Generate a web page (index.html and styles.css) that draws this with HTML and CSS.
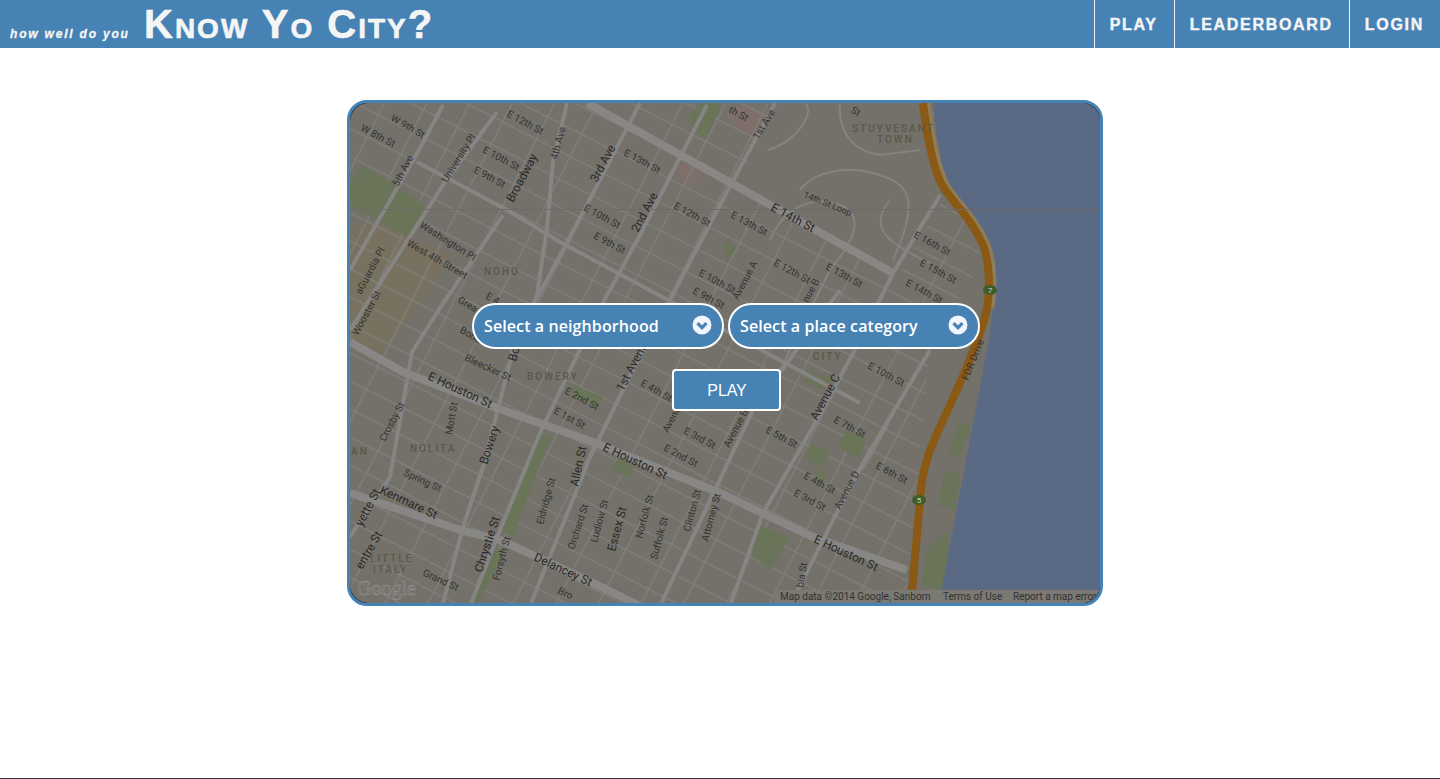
FILE: index.html
```html
<!DOCTYPE html>
<html lang="en">
<head>
    <meta charset="UTF-8">
    <meta name="viewport" content="width=device-width, initial-scale=1.0">
    <title>Know Yo City?</title>
    <link rel="stylesheet" href="styles.css">
</head>
<body>
    <header class="topbar">
        <div class="brand">
            <span class="tagline">how well do you</span>
            <span class="title">Know Yo City?</span>
        </div>
        <nav class="nav">
            <a href="#">PLAY</a>
            <a href="#">LEADERBOARD</a>
            <a href="#">LOGIN</a>
        </nav>
    </header>

    <main class="stage">
        <div class="map-frame">
            <svg class="map" viewBox="350 103 750 500" width="750" height="500">
                <defs>
                    <!-- the street grid, turned to the angle of Manhattan -->
                    <pattern id="grid" width="38" height="25" patternUnits="userSpaceOnUse" patternTransform="rotate(27 350 103)">
                        <path class="grid-line" d="M0 0H38M0 0V25"/>
                    </pattern>
                </defs>
                <rect class="land" x="350" y="103" width="750" height="500"/>

                <!-- blocks under the grid -->
                <path class="sand" d="M350 225L375 222 450 255 430 290 400 330 380 355 350 345Z"/>
                <path class="pink" d="M725 115L745 103 768 118 752 137ZM673 165L695 162 705 180 686 188Z"/>
                <rect class="grid-fill" x="350" y="103" width="750" height="500"/>

                <!-- Stuyvesant Town and the strip along the river have no grid -->
                <path class="land" d="M772 103H930L945 195 898 276 738 184Z"/>
                <path class="land" d="M930 340L1000 240V606H905Z"/>

                <path class="park" d="M363 165L428 207 410 238 350 205V182Z"/>
                <path class="park" d="M687 120L700 103H722L705 140ZM540 433L551 437 513 537 500 530ZM497 548L504 553 478 603H470Z"/>
                <path class="park" d="M757 524L790 537 770 570 752 555ZM846 430L866 437 860 458 838 448ZM958 423L970 426 960 458 948 453ZM945 470L960 474 955 510 938 505Z"/>
                <path class="park" d="M926 551L948 530 950 570 942 590 922 585ZM574 385L603 397 598 407 570 396ZM812 443L830 452 822 468 805 458ZM723 242L736 247 728 262ZM700 105L712 112 704 125ZM810 372L832 378 825 390 803 382ZM618 458L634 466 628 478 612 470ZM815 470L826 474 820 488Z"/>

                <!-- lanes -->
                <path class="lane" d="M840 103C838 130 850 150 880 155L920 150M768 150C800 140 815 110 805 103M800 190C815 170 850 165 880 175S920 200 893 260M890 200C870 225 880 240 930 263M770 240C785 205 815 195 840 205S855 240 830 270L780 370M930 350C905 385 880 445 862 470"/>

                <!-- wider streets -->
                <path class="road" d="M417 162L507 210 560 242 720 328 860 403M443 105L420 148 350 270M497 112L443 185 350 330M503 215L440 308 412 352 390 477 350 537M775 103L720 205 633 370 590 457 530 606M707 105L640 235 600 308 540 433 500 530 470 606M640 103L580 218 520 330M567 103L553 162 547 228 537 295 513 350 483 467 463 527 443 603M940 195L893 273 853 353 817 420 763 513 730 606M840 290L753 410 660 606M930 350L863 463 833 520 793 600"/>
                <path class="road-wide" d="M350 342L403 372 497 408 593 442 720 493 813 537 907 570M350 493L460 530 500 540 593 583 640 606M587 103L893 273"/>

                <path class="water" d="M933 103C937 140 940 165 950 185S985 235 993 262C997 285 990 340 985 360L953 530 942 587 940 603H1100V103Z"/>
                <path class="highway-edge" d="M926 103C930 135 935 165 944 183S973 215 986 245C993 262 993 290 990 308"/>
                <path class="highway" d="M923 103C927 135 932 165 941 183S970 215 983 245C990 262 990 290 987 308S975 345 965 372L935 438C925 460 921 480 920 500L911 603"/>
                <path class="seam" d="M350 209.500H1100"/>

                <ellipse class="shield" cx="990" cy="290" rx="7" ry="5"/>
                <ellipse class="shield" cx="919" cy="500" rx="7" ry="5"/>
                <text class="shield-num" x="990" y="293">7</text>
                <text class="shield-num" x="919" y="503">5</text>

                <!-- street names -->
                <text class="st" transform="translate(390 120) rotate(30)">W 9th St</text>
                <text class="st" transform="translate(360 130) rotate(28)">W 8th St</text>
                <text class="st" transform="translate(506 116) rotate(28)">E 12th St</text>
                <text class="st" transform="translate(557 160) rotate(-75)">4th Ave</text>
                <text class="st big" transform="translate(513 203) rotate(-62)">Broadway</text>
                <text class="st" transform="translate(482 152) rotate(28)">E 10th St</text>
                <text class="st" transform="translate(473 172) rotate(28)">E 9th St</text>
                <text class="st" transform="translate(447 183) rotate(-58)">University Pl</text>
                <text class="st" transform="translate(398 187) rotate(-62)">5th Ave</text>
                <text class="st big" transform="translate(597 183) rotate(-62)">3rd Ave</text>
                <text class="st" transform="translate(623 155) rotate(28)">E 13th St</text>
                <text class="st" transform="translate(673 208) rotate(28)">E 12th St</text>
                <text class="st big" transform="translate(638 233) rotate(-62)">2nd Ave</text>
                <text class="st" transform="translate(583 210) rotate(28)">E 10th St</text>
                <text class="st" transform="translate(593 238) rotate(28)">E 9th St</text>
                <text class="st" transform="translate(419 227) rotate(32)">Washington Pl</text>
                <text class="st" transform="translate(406 245) rotate(30)">West 4th Street</text>
                <text class="st" transform="translate(698 275) rotate(28)">E 10th St</text>
                <text class="st" transform="translate(692 293) rotate(28)">E 9th St</text>
                <text class="st" transform="translate(361 295) rotate(-62)">aGuardia Pl</text>
                <text class="st" transform="translate(358 336) rotate(-62)">Wooster St</text>
                <text class="st" transform="translate(457 302) rotate(30)">Grea</text>
                <text class="st" transform="translate(459 332) rotate(30)">Bond</text>
                <text class="st" transform="translate(485 298) rotate(30)">E 4</text>
                <text class="st" transform="translate(758 140) rotate(-58)">1st Ave</text>
                <text class="st" transform="translate(728 112) rotate(28)">th St</text>
                <text class="st" transform="translate(850 112) rotate(30)">St</text>
                <text class="st tiny" transform="translate(803 197) rotate(22)">14th St Loop</text>
                <text class="st big" transform="translate(770 210) rotate(28)">E 14th St</text>
                <text class="st" transform="translate(730 217) rotate(28)">E 13th St</text>
                <text class="st" transform="translate(773 265) rotate(28)">E 12th St</text>
                <text class="st" transform="translate(825 269) rotate(28)">E 13th St</text>
                <text class="st" transform="translate(913 237) rotate(28)">E 16th St</text>
                <text class="st" transform="translate(919 265) rotate(28)">E 15th St</text>
                <text class="st" transform="translate(905 285) rotate(28)">E 14th St</text>
                <text class="st" transform="translate(738 300) rotate(-62)">Avenue A</text>
                <text class="st" transform="translate(808 303) rotate(-62)">nue B</text>
                <text class="st" transform="translate(968 381) rotate(-68)">FDR Drive</text>
                <text class="st" transform="translate(464 360) rotate(25)">Bleecker St</text>
                <text class="st big" transform="translate(516 362) rotate(-75)">Bo</text>
                <text class="st big" transform="translate(623 392) rotate(-62)">1st Avenue</text>
                <text class="st" transform="translate(640 385) rotate(30)">E 4th St</text>
                <text class="st" transform="translate(564 393) rotate(28)">E 2nd St</text>
                <text class="st" transform="translate(553 413) rotate(28)">E 1st St</text>
                <text class="st big" transform="translate(427 379) rotate(25)">E Houston St</text>
                <text class="st big" transform="translate(602 450) rotate(25)">E Houston St</text>
                <text class="st big" transform="translate(813 542) rotate(25)">E Houston St</text>
                <text class="st" transform="translate(385 442) rotate(-62)">Crosby St</text>
                <text class="st" transform="translate(452 435) rotate(-80)">Mott St</text>
                <text class="st big" transform="translate(487 465) rotate(-72)">Bowery</text>
                <text class="st big" transform="translate(578 487) rotate(-78)">Allen St</text>
                <text class="st" transform="translate(543 525) rotate(-75)">Eldridge St</text>
                <text class="st" transform="translate(574 550) rotate(-72)">Orchard St</text>
                <text class="st" transform="translate(597 543) rotate(-75)">Ludlow St</text>
                <text class="st big" transform="translate(615 552) rotate(-75)">Essex St</text>
                <text class="st" transform="translate(642 539) rotate(-75)">Norfolk St</text>
                <text class="st" transform="translate(657 560) rotate(-75)">Suffolk St</text>
                <text class="st" transform="translate(690 532) rotate(-75)">Clinton St</text>
                <text class="st" transform="translate(708 542) rotate(-75)">Attorney St</text>
                <text class="st" transform="translate(403 475) rotate(25)">Spring St</text>
                <text class="st big" transform="translate(379 493) rotate(25)">Kenmare St</text>
                <text class="st big" transform="translate(482 573) rotate(-72)">Chrystie St</text>
                <text class="st" transform="translate(499 581) rotate(-75)">Forsyth St</text>
                <text class="st big" transform="translate(533 560) rotate(25)">Delancey St</text>
                <text class="st" transform="translate(422 575) rotate(25)">Grand St</text>
                <text class="st" transform="translate(557 593) rotate(25)">Bro</text>
                <text class="st big" transform="translate(362 527) rotate(-62)">yette St</text>
                <text class="st big" transform="translate(362 570) rotate(-60)">entre St</text>
                <text class="st" transform="translate(765 432) rotate(28)">E 5th St</text>
                <text class="st" transform="translate(803 478) rotate(28)">E 4th St</text>
                <text class="st" transform="translate(793 495) rotate(28)">E 3rd St</text>
                <text class="st" transform="translate(840 510) rotate(-62)">Avenue D</text>
                <text class="st" transform="translate(729 448) rotate(-62)">Avenue B</text>
                <text class="st" transform="translate(668 433) rotate(-62)">Avenue</text>
                <text class="st big" transform="translate(817 421) rotate(-62)">Avenue C</text>
                <text class="st" transform="translate(833 422) rotate(28)">E 7th St</text>
                <text class="st" transform="translate(875 468) rotate(28)">E 6th St</text>
                <text class="st" transform="translate(867 368) rotate(28)">E 10th St</text>
                <text class="st" transform="translate(683 433) rotate(28)">E 3rd St</text>
                <text class="st" transform="translate(663 450) rotate(28)">E 2nd St</text>
                <text class="st" transform="translate(803 588) rotate(-80)">bia St</text>

                <!-- neighborhoods -->
                <text class="area" x="484" y="275">NOHO</text>
                <text class="area" x="852" y="132">STUYVESANT</text>
                <text class="area" x="877" y="143">TOWN</text>
                <text class="area" x="813" y="360">CITY</text>
                <text class="area" x="527" y="380">BOWERY</text>
                <text class="area" x="410" y="452">NOLITA</text>
                <text class="area" x="351" y="455">AN</text>
                <text class="area" x="370" y="562">LITTLE</text>
                <text class="area" x="373" y="573">ITALY</text>

                <text class="logo" x="357" y="595">Google</text>

                <rect class="credit-bg" x="774" y="590" width="326" height="13"/>
                <text class="credit" x="780" y="600">Map data ©2014 Google, Sanborn</text>
                <text class="credit" x="943" y="600">Terms of Use</text>
                <text class="credit" x="1013" y="600">Report a map error</text>
            </svg>

            <form class="controls">
                <div class="pickers">
                    <div class="picker">
                        <select>
                            <option>Select a neighborhood</option>
                        </select>
                        <svg class="chevron" viewBox="0 0 20 20" width="20" height="20">
                            <circle class="chevron-disc" cx="10" cy="10" r="9.500"/>
                            <path class="chevron-mark" d="M5.500 8.200L10 12.700 14.500 8.200"/>
                        </svg>
                    </div>
                    <div class="picker">
                        <select>
                            <option>Select a place category</option>
                        </select>
                        <svg class="chevron" viewBox="0 0 20 20" width="20" height="20">
                            <circle class="chevron-disc" cx="10" cy="10" r="9.500"/>
                            <path class="chevron-mark" d="M5.500 8.200L10 12.700 14.500 8.200"/>
                        </svg>
                    </div>
                </div>
                <button class="play-btn" type="button">PLAY</button>
            </form>
        </div>
    </main>
</body>
</html>
```

FILE: styles.css
```css
html, body {
    height: 100%;
}

body {
    margin: 0;
    box-sizing: border-box;
    border-bottom: 1px solid #333;
    background-color: #fff;
    font-family: "Liberation Sans", Arial, sans-serif;
}

.topbar {
    display: flex;
    justify-content: space-between;
    height: 48px;
    background-color: #4682b4;
}

.brand {
    display: flex;
    align-items: baseline;
    padding-left: 10px;
    color: #f5f5f5;
    font-weight: bold;
    line-height: 48px;
}

.tagline {
    width: 134px;
    font-size: 12px;
    font-style: italic;
    letter-spacing: 1.8px;
    -webkit-text-stroke: 0.3px #f5f5f5;
}

.title {
    font-size: 40px;
    font-variant: small-caps;
    letter-spacing: 2px;
    -webkit-text-stroke: 0.6px #f5f5f5;
}

.nav {
    display: flex;
}

.nav a {
    padding: 1px 16px 0 15px;
    border-left: 1px solid #f0f4f8;
    color: #f5f5f5;
    font-size: 16px;
    font-weight: bold;
    letter-spacing: 1.7px;
    line-height: 47px;
    text-decoration: none;
    -webkit-text-stroke: 0.4px #f5f5f5;
}

.stage {
    display: flex;
    justify-content: center;
    padding: 52px 0 0 10px;
}

.map-frame {
    position: relative;
    width: 750px;
    height: 500px;
    border: 3px solid #4682b4;
    border-radius: 20px;
    background-color: #22384e;
    overflow: hidden;
}

.map {
    display: block;
    border-radius: 19px;
}

.land { fill: #73716a; }
.sand { fill: #78715f; }
.pink { fill: #7f6f6b; }
.park { fill: #6a7458; }
.water { fill: #5a6a85; }
.grid-fill { fill: url(#grid); }

.grid-line {
    fill: none;
    stroke: #81807b;
    stroke-width: 2.5;
}

.lane, .road, .road-wide, .highway, .highway-edge, .seam {
    fill: none;
}

.lane {
    stroke: #85837e;
    stroke-width: 2;
}

.road {
    stroke: #868583;
    stroke-width: 4;
}

.road-wide {
    stroke: #888785;
    stroke-width: 8;
}

.highway {
    stroke: #8a5a14;
    stroke-width: 8;
}

.highway-edge {
    stroke: #8f7d5a;
    stroke-width: 9;
}

.seam {
    stroke: #6c6b68;
    stroke-width: 1;
}

.shield { fill: #3f5c2c; }

.shield-num {
    fill: #c8d0c0;
    font-family: Roboto, sans-serif;
    font-size: 8px;
    text-anchor: middle;
}

.st {
    fill: #353431;
    font-family: Roboto, sans-serif;
    font-size: 10px;
}

.st.big {
    fill: #2a2927;
    font-size: 12px;
}

.st.tiny {
    font-size: 9px;
}

.area {
    fill: #5c5748;
    font-family: Roboto, sans-serif;
    font-size: 10px;
    font-weight: 500;
    letter-spacing: 2px;
}

.logo {
    fill: #75726b;
    stroke: #908e8a;
    stroke-width: 0.6px;
    font-family: "Liberation Serif", serif;
    font-size: 20px;
}

.credit-bg { fill: #7b7974; }

.credit {
    fill: #33322f;
    font-family: Roboto, sans-serif;
    font-size: 10px;
}

/* sits over the middle of the map */
.controls {
    position: absolute;
    left: 122px;
    top: 200px;
    display: flex;
    flex-direction: column;
    align-items: center;
    gap: 20px;
}

.pickers {
    display: flex;
    gap: 4px;
}

.picker {
    position: relative;
}

.picker select {
    display: block;
    width: 252px;
    height: 46px;
    padding: 0 10px;
    border: 2px solid #fff;
    border-radius: 23px;
    background-color: #4682b4;
    color: #fff;
    font-family: "Open Sans", sans-serif;
    font-size: 16px;
    font-weight: 600;
    letter-spacing: 0.1px;
    appearance: none;
    -webkit-appearance: none;
}

.chevron {
    position: absolute;
    right: 12px;
    top: 12px;
    pointer-events: none;
}

.chevron-disc { fill: #f2f6fa; }

.chevron-mark {
    fill: none;
    stroke: #4682b4;
    stroke-width: 3.2;
}

.play-btn {
    width: 109px;
    height: 42px;
    padding: 1px 0 0 2px;
    border: 2px solid #fff;
    border-radius: 4px;
    background-color: #4682b4;
    color: #fff;
    font-family: "Liberation Sans", Arial, sans-serif;
    font-size: 16px;
    letter-spacing: -0.1px;
}
```
